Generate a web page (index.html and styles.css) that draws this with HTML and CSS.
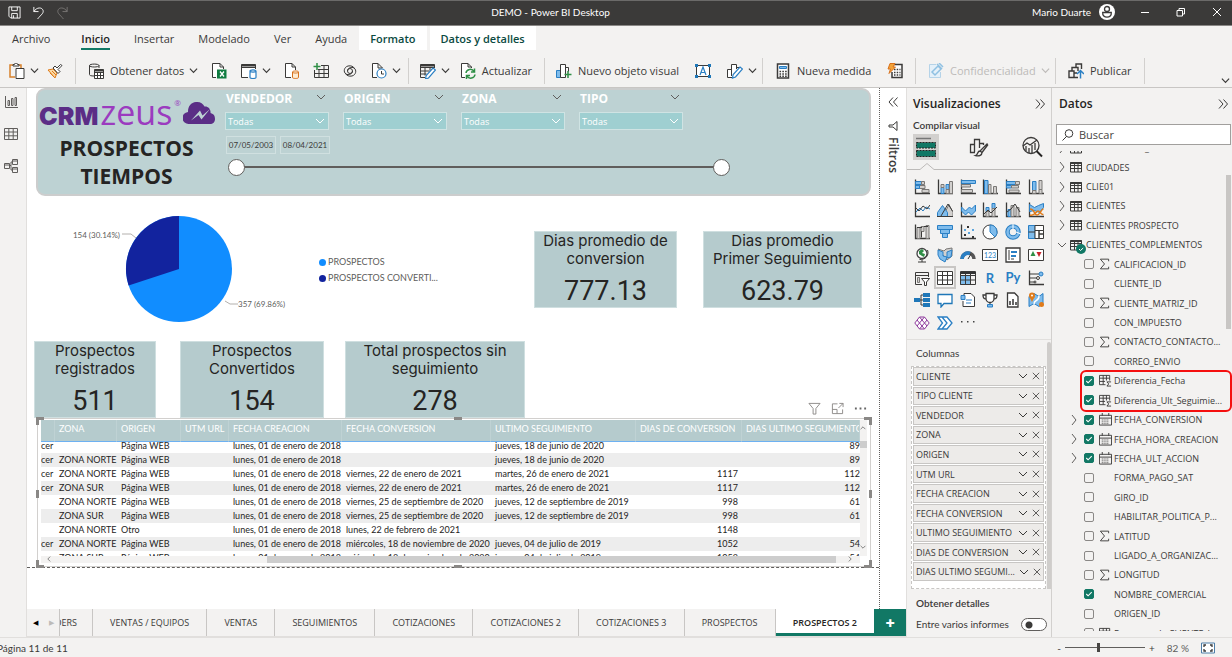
FILE: index.html
```
<!DOCTYPE html>
<html lang="es">

<head>
  <meta charset="UTF-8">
  <meta name="viewport" content="width=device-width, initial-scale=1.0">
  <title>DEMO - Power BI Desktop</title>
  <link rel="stylesheet" href="styles.css">
</head>

<body>
  <!-- Shared symbols -->
  <svg class="symbols" aria-hidden="true">
    <symbol id="chev" viewBox="0 0 10 10"><path class="ln" d="M1 3l4 4 4-4" /></symbol>
    <symbol id="chev-r" viewBox="0 0 10 10"><path class="ln" d="M3 0l4 5-4 5" /></symbol>
    <symbol id="close" viewBox="0 0 10 10"><path class="ln" d="M1 1l8 8M9 1l-8 8" /></symbol>
    <symbol id="dbl-r" viewBox="0 0 10 10"><path class="ln" d="M1 .5L5 5 1 9.5M5.5 .5l4 4.5-4 4.5" /></symbol>
    <symbol id="dbl-l" viewBox="0 0 10 10"><path class="ln" d="M5 .5L1 5l4 4.5M9.5 .5l-4 4.5 4 4.5" /></symbol>
    <symbol id="grid" viewBox="0 0 12 12"><path class="ln" d="M.5 1.5h11v9.5H.5zM.5 4.5h11M.5 7.5h11M4.5 1.5v9.5M8 1.5v9.5" /><path class="ln" d="M.5 2h11" stroke-width="2" /></symbol>
    <symbol id="calc" viewBox="0 0 14 14"><path class="ln" d="M7 11.5H.5V1.5h11V7M.5 4.5h11M.5 8h6M4.5 1.5v10M8 1.5V7" /><path class="ln" d="M13 8.5H8.5l2 2.2-2 2.3H13" /></symbol>
    <symbol id="cal" viewBox="0 0 14 14"><path class="ln" d="M.5 2.5h13v10.5H.5zM.5 5.5h13M3.5 0v3M10.5 0v3" /><path class="ln" stroke-dasharray="1 1" d="M3 7.5h8M3 9.5h8M3 11.5h8" /></symbol>
    <symbol id="sigma" viewBox="0 0 12 12"><path class="ln" d="M10.5 3V.7H1.5L6 6l-4.5 5.3h9V9" /></symbol>
  </svg>

  <header class="titlebar">
    <div class="quick">
      <button aria-label="Guardar"><svg viewBox="0 0 14 14"><path class="ln" d="M1 1h12v12H3l-2-2zM4 1v4h6V1M4 13V8h6v5M6 10v3" /></svg></button>
      <button aria-label="Deshacer"><svg viewBox="0 0 14 14"><path class="ln" d="M2 1v5h5M2 6c3-5 9-5 10-1 .5 3-2 4-6 9" /></svg></button>
      <button class="dim" aria-label="Rehacer"><svg viewBox="0 0 14 14"><path class="ln" d="M12 1v5H7M12 6C9 1 3 1 2 5c-.5 3 2 4 6 9" /></svg></button>
    </div>
    <h1>DEMO - Power BI Desktop</h1>
    <div class="account">
      <span>Mario Duarte</span>
      <svg class="avatar" viewBox="0 0 16 16"><circle cx="8" cy="8" r="8" fill="#fff" /><circle cx="8" cy="5" r="2.5" fill="none" stroke="#3b3a39" stroke-width="1.3" /><path d="M3.7 8.5h8.6c.3 3-1.7 4.7-4.3 4.7s-4.6-1.7-4.3-4.7z" fill="none" stroke="#3b3a39" stroke-width="1.3" /></svg>
    </div>
    <div class="window-btns">
      <button aria-label="Minimizar"><svg viewBox="0 0 10 10"><path class="ln" d="M1 5.5h8" /></svg></button>
      <button aria-label="Restaurar"><svg viewBox="0 0 10 10"><path class="ln" d="M1 3.5h5.5V9H1zM3 3.5v-2h5.5V7h-2" /></svg></button>
      <button aria-label="Cerrar"><svg viewBox="0 0 10 10"><path class="ln" d="M1 1l8 8M9 1l-8 8" /></svg></button>
    </div>
  </header>

  <nav class="menu">
    <a href="#" class="first">Archivo</a>
    <a href="#" class="active">Inicio</a>
    <a href="#">Insertar</a>
    <a href="#">Modelado</a>
    <a href="#">Ver</a>
    <a href="#">Ayuda</a>
    <a href="#" class="context">Formato</a>
    <a href="#" class="context">Datos y detalles</a>
  </nav>

  <div class="ribbon">
    <div class="group g-clip">
      <button aria-label="Pegar"><svg viewBox="0 0 16 16"><path d="M5 2H1v12h5" fill="none" stroke="#d8812b" stroke-width="1.5" /><path d="M10 2h2v3" fill="none" stroke="#d8812b" stroke-width="1.5" /><path class="ln" fill="#fff" d="M4 3V1.5h1.5a1.5 1.5 0 0 1 3 0H10V3zM7 5.5h8v10H7z" /></svg><svg class="chev"><use href="#chev" /></svg></button>
      <button aria-label="Copiar formato"><svg viewBox="0 0 16 16"><path d="M1 7l5-1 4 4-2 5z" fill="#fbd9a5" stroke="#e07b1a" /><path d="M3 10l4 4M5 8l4 4" stroke="#e07b1a" /><path class="ln" d="M6 5l2-2 2 2 3.5-3.5 1.5 1L11 6.5l2 2-2 2z" fill="#fff" /></svg></button>
    </div>
    <div class="group g-data">
      <button><svg viewBox="0 0 16 16"><path class="ln" d="M6 13c-3 0-4.5-.5-4.5-1.5v-9C1.5.6 11 .6 11 2.5V5M1.5 2.5C1.5 4.5 11 4.5 11 2.5" /><path class="ln" fill="#fff" d="M6.5 6.5h9v9h-9zM6.5 9.5h9M6.5 12.5h9M9.5 9.5v6M12.5 9.5v6" /><path class="ln" stroke-width="2" d="M6.5 7.5h9" /></svg>Obtener datos<svg class="chev"><use href="#chev" /></svg></button>
      <button aria-label="Libro de Excel"><svg viewBox="0 0 16 16"><path class="ln" fill="#fff" d="M5 14.5H1.5V.5H9L12.5 4v2" /><path class="ln" d="M9 .5V4h3.5" /><rect x="6" y="6.5" width="9.5" height="9" fill="#107c41" /><path d="M9 8.5l4 5M13 8.5l-4 5" stroke="#fff" stroke-width="1.3" /></svg></button>
      <button aria-label="Centro de datos"><svg viewBox="0 0 16 16"><path class="ln" fill="#fff" d="M7 14.5H.5V1.5h14V6M.5 4.5h14" /><path class="ln" d="M.5 2.5h14" stroke-width="2" /><path class="bo" d="M9 8v6.5c0 1.3 6 1.3 6 0V8M9 8c0 1.4 6 1.4 6 0s-6-1.4-6 0z" /></svg><svg class="chev"><use href="#chev" /></svg></button>
      <button aria-label="SQL Server"><svg viewBox="0 0 16 16"><path class="ln" fill="#fff" d="M7 14.5H1.5V.5H8L11.5 4v3M8 .5V4h3.5" /><path d="M8.5 9v5.5c0 1.3 6 1.3 6 0V9c0-1.4-6-1.4-6 0c0 1.4 6 1.4 6 0" fill="#fdebd3" stroke="#d8701b" /></svg></button>
      <button aria-label="Especificar datos"><svg viewBox="0 0 16 16"><path class="ln" d="M8 2.5h7.5v12h-14V7M1.5 10.5h14M5 6.5h10.5M6 6.5v8M11 2.5v12" /><path d="M4 0v7M.5 3.5h7" stroke="#2f8f46" stroke-width="1.5" /></svg></button>
      <button aria-label="Dataverse"><svg viewBox="0 0 16 16"><circle class="ln" cx="8" cy="8" r="2.5" /><path class="ln" d="M10.5 8c0 3-4 4.500-6.500 3C1 9 2 4 6 3c3-.7 5.500.5 6.500 2.500M5.500 8c0-3 4-4.500 6.500-3 3 2 2 7-2 8-3 .7-5.500-.5-6.500-2.500" /></svg></button>
      <button aria-label="Orígenes recientes"><svg viewBox="0 0 16 16"><path class="ln" fill="#fff" d="M6 14.5H1.5V.5H7L11.5 5M7 .5V5h4.5" /><circle class="bo" cx="10.5" cy="10.5" r="4.5" fill="#fff" /><path class="ln" d="M10.5 8v3h2.5" /></svg><svg class="chev"><use href="#chev" /></svg></button>
    </div>
    <div class="group g-query">
      <button aria-label="Transformar datos"><svg viewBox="0 0 16 16"><path class="ln" d="M5 14.5H.5v-13h14V5M.5 4.5h14M.5 8h9M.5 11h6M5 4.5v8M10 4.5v3" /><path class="ln" d="M.5 2.5h14" stroke-width="2" /><path class="bo" fill="#fff" d="M13 5l2.5 2-7 8-3 1 .7-3.5z" /></svg><svg class="chev"><use href="#chev" /></svg></button>
      <button><svg viewBox="0 0 16 16"><path class="ln" fill="#fff" d="M5 14.5H1.5V.5H8L11.5 4v1M8 .5V4h3.5" /><path d="M6 10c.5-4 6-5 8-1.5M14.5 5.5v3.5H11M15 11.5c-.5 4-6 5-8 1.5M6.5 16v-3.5H10" fill="none" stroke="#2f8f46" stroke-width="1.5" /></svg>Actualizar</button>
    </div>
    <div class="group g-insert">
      <button><svg viewBox="0 0 16 16"><path class="bf" d="M.5 7.5h4v7h-4z" /><path class="ln" fill="#fff" d="M4.5 1.5h5v13h-5zM9.5 4.5h3v4" /><path d="M12 8v7M8.5 11.5h7" stroke="#2f8f46" stroke-width="1.5" /></svg>Nuevo objeto visual</button>
      <button aria-label="Cuadro de texto"><svg viewBox="0 0 16 16"><path class="ln" d="M1.5 2.5h13v11h-13z" fill="#fff" /><path class="bo" d="M5 12l3-8 3 8M6 9.5h4" /><path fill="#1f77b8" d="M0 1h3v3H0zM13 1h3v3h-3zM0 12h3v3H0zM13 12h3v3h-3z" /></svg></button>
      <button aria-label="Más objetos visuales"><svg viewBox="0 0 16 16"><path class="ln" d="M5 14.5H.5V6.5h4M4.5 13V1.5h5V6M9.5 4.5h4" fill="#fff" /><path class="bo" fill="#fff" d="M13 4l2.5 2-7 8-3 1 .7-3.5z" /></svg><svg class="chev"><use href="#chev" /></svg></button>
    </div>
    <div class="group g-calc">
      <button><svg viewBox="0 0 16 16"><path class="ln" stroke-width="1.5" fill="#fff" d="M2.5 1h11v14h-11z" /><path class="bf" d="M4.5 3.5h7v2h-7z" /><path class="ln" stroke-width="1.6" stroke-dasharray="1.6 1.2" d="M4.5 8.5h7.5M4.5 11h7.5M4.5 13.2h7.5" /></svg>Nueva medida</button>
      <button aria-label="Medida rápida"><svg viewBox="0 0 16 16"><path class="ln" stroke-width="1.5" fill="#fff" d="M7 1.5h8v13H5V9" /><path class="ln" stroke-width="1.5" stroke-dasharray="1.5 1.2" d="M7 6.5h6.5M7 9.5h6.5M7 12h6.5" /><path fill="#f2a33a" stroke="#d8701b" d="M3 .5h5L6 4h2.5L2 10.5 3.5 6H1z" /></svg></button>
    </div>
    <div class="group g-conf">
      <button disabled><svg viewBox="0 0 16 16"><path fill="#e4f0f9" stroke="#b5d3e8" d="M8 1.5H1.5v13h11V9" /><path fill="none" stroke="#8fc0e2" stroke-width="1.5" d="M4 9l6-6 3 3-6 6zM9 1l5 5M11 0l4 4" /></svg>Confidencialidad<svg class="chev"><use href="#chev" /></svg></button>
    </div>
    <div class="group g-share">
      <button><svg viewBox="0 0 16 16"><path class="ln" stroke-width="1.4" d="M1 8h5v6.5H1zM4 8V4.5h6V8M8 4V1h5.5v5M6 14.5h4M6 10h3" /><path stroke="#2a7fc4" stroke-width="1.5" fill="none" d="M12.5 15.5V8M9 11l3.5-3.5L16 11" /></svg>Publicar</button>
    </div>
    <button class="collapse" aria-label="Contraer cinta"><svg class="chev"><use href="#chev" /></svg></button>
  </div>

  <main class="workspace">
    <aside class="views">
      <button aria-label="Informe"><svg viewBox="0 0 14 14"><path class="ln" d="M1.5 1v11.5H14M4 5.5h1.5v5H4zM7.5 3.5H9v7H7.5zM11 2.5h1.5v8H11z" /></svg></button>
      <button aria-label="Datos"><svg viewBox="0 0 14 14"><path class="ln" d="M.5 1.5h13v11H.5zM.5 5h13M.5 8.8h13M4.8 1.5v11M9.2 1.5v11" /></svg></button>
      <button aria-label="Modelo"><svg viewBox="0 0 14 14"><path class="ln" d="M.5 4.5h5v5h-5zM8.5 .5h5v5h-5zM8.5 8.5h5v5h-5zM.5 6h5M8.5 2h5M8.5 10h5M5.5 6.5h1.5V3h1.5M7 6.5v4.5h1.5" /></svg></button>
    </aside>

    <div class="center">
      <div class="stage">
        <section class="page">
          <div class="banner">
            <div class="brand">
              <div class="logo">
                <span class="crm">CRM</span><span class="zeus">zeus</span><sup>®</sup>
                <svg viewBox="0 0 32 24"><path fill="#5b2d86" d="M6 23a6 6 0 0 1-1-12C5 5 8 1.5 13 1c4-.5 7 1.5 8.5 4.5C25 5 28 8 27.5 12 31 13 32 15 32 18c0 3-2 5-5 5z" /><path fill="#bdd2d3" d="M8 19.5l9-10 2.5 5L27 8l-8.500 10.500-3-4.500z" /></svg>
              </div>
              <h2>PROSPECTOS<br>TIEMPOS</h2>
            </div>
            <div class="slicers">
              <div class="slicer-row" id="slicers"></div>
              <div class="dates">
                <input type="text" value="07/05/2003" aria-label="Fecha inicial">
                <input type="text" value="08/04/2021" aria-label="Fecha final">
              </div>
              <div class="range">
                <input type="range" min="0" max="100" value="0" aria-label="Desde">
                <input type="range" min="0" max="100" value="100" aria-label="Hasta">
              </div>
            </div>
          </div>

          <div class="row-top">
            <svg class="pie" viewBox="0 0 220 110" role="img" aria-label="Prospectos">
              <circle cx="109" cy="55" r="53" fill="#118dff" />
              <path fill="#12239e" d="M109 55V2A53 53 0 0 0 58.6 71.5z" />
              <path class="lead" d="M52 20h9l5 4M155 87l5 3h8" />
              <text x="50" y="24" text-anchor="end">154 (30.14%)</text>
              <text x="168" y="93">357 (69.86%)</text>
            </svg>
            <ul class="legend">
              <li><i class="dot light"></i>PROSPECTOS</li>
              <li><i class="dot dark"></i>PROSPECTOS CONVERTI...</li>
            </ul>
            <div class="card w-conv"><p>Dias promedio de conversion</p><strong>777.13</strong></div>
            <div class="card w-seg"><p>Dias promedio<br>Primer Seguimiento</p><strong>623.79</strong></div>
          </div>

          <div class="row-bottom">
            <div class="card w-reg"><p>Prospectos registrados</p><strong>511</strong></div>
            <div class="card w-cvt"><p>Prospectos<br>Convertidos</p><strong>154</strong></div>
            <div class="card w-sin"><p>Total prospectos sin seguimiento</p><strong>278</strong></div>
            <div class="visual-tools">
              <button aria-label="Filtros"><svg viewBox="0 0 14 14"><path class="ln" d="M1 1.5h12L8.5 7v6h-3V7z" /></svg></button>
              <button aria-label="Modo de enfoque"><svg viewBox="0 0 14 14"><path class="ln" d="M7 2H1.5v10.5h11V8M9 1.5h4v4M13 1.5L8 6.5M1.5 8h5v4.5" /></svg></button>
              <button aria-label="Más opciones"><svg viewBox="0 0 14 14"><path fill="#666" d="M1 6h2v2H1zM6 6h2v2H6zM11 6h2v2h-2z" /></svg></button>
            </div>
          </div>

          <div class="table-visual">
            <i class="handle tl"></i><i class="handle tc"></i><i class="handle tr"></i>
            <i class="handle ml"></i><i class="handle mr"></i>
            <i class="handle bl"></i><i class="handle bc"></i><i class="handle br"></i>
            <div class="table-scroll" id="table-scroll">
              <table>
                <colgroup>
                  <col class="c1"><col class="c2"><col class="c3"><col class="c4"><col class="c5"><col class="c6"><col class="c7"><col class="c8"><col>
                </colgroup>
                <thead>
                  <tr>
                    <th></th>
                    <th>ZONA</th>
                    <th>ORIGEN</th>
                    <th>UTM URL</th>
                    <th>FECHA CREACION</th>
                    <th>FECHA CONVERSION</th>
                    <th>ULTIMO SEGUIMIENTO</th>
                    <th>DIAS DE CONVERSION</th>
                    <th>DIAS ULTIMO SEGUMIENTO</th>
                  </tr>
                </thead>
                <tbody id="table-body"></tbody>
              </table>
            </div>
            <div class="vbar"><svg><use href="#chev" /></svg><i></i><svg><use href="#chev" /></svg></div>
            <div class="hbar"><svg><use href="#chev" /></svg><i></i><svg><use href="#chev" /></svg></div>
          </div>
        </section>

        <aside class="filters">
          <button aria-label="Expandir"><svg><use href="#dbl-l" /></svg></button>
          <svg viewBox="0 0 10 10"><path class="ln" d="M9 .5v9L5 6H1V4h4z" /></svg>
          <h3>Filtros</h3>
        </aside>
      </div>

      <nav class="tabs">
        <span class="arrows"><button aria-label="Anterior">◀</button><button disabled aria-label="Siguiente">▶</button></span>
        <button class="t0"><span>DERS</span></button>
        <button>VENTAS / EQUIPOS</button>
        <button>VENTAS</button>
        <button>SEGUIMIENTOS</button>
        <button>COTIZACIONES</button>
        <button>COTIZACIONES 2</button>
        <button>COTIZACIONES 3</button>
        <button>PROSPECTOS</button>
        <button class="active">PROSPECTOS 2</button>
        <button class="add" aria-label="Nueva página">+</button>
      </nav>
    </div>

    <aside class="viz">
      <div class="pane-head">
        <h3>Visualizaciones</h3>
        <button aria-label="Contraer"><svg><use href="#dbl-r" /></svg></button>
      </div>
      <h4>Compilar visual</h4>
      <div class="modes">
        <button class="on" aria-label="Compilar"><svg viewBox="0 0 22 22"><path d="M1 2.5h15" stroke="#777" stroke-width="1.5" /><path d="M1.5 6.5h19v5.5h-19zM1.5 14.5h19v6h-19z" fill="#117865" stroke="#252423" stroke-dasharray="2 1" /></svg></button>
        <button aria-label="Formato"><svg viewBox="0 0 22 22"><path class="ln" stroke-width="1.3" d="M7 16.5H2.5v-8h4M6.5 16V3.5h5V12M11.5 7.5h4V9" /><path class="ln" stroke-width="1.3" d="M19.5 7.5L12 15M20 8.5l-6 8M12 15c-3 0-1.5 3.5-4.5 4.5 4 1 6.5-.5 6.5-3z" /></svg></button>
        <button aria-label="Analizar"><svg viewBox="0 0 22 22"><circle class="ln" cx="10" cy="9.5" r="8" stroke-width="1.3" /><path class="ln" stroke-width="1.3" d="M2 10l4-3 3 2 7-5M5 10v5M8 12v5M11 9v8M14 7v7" /><path d="M15.5 15l5.5 5.5" stroke="#252423" stroke-width="2" /></svg></button>
      </div>
      <svg class="notch" viewBox="0 0 145 8" preserveAspectRatio="xMinYMin slice"><path d="M0 6.5h13l7-6 7 6h140" fill="none" stroke="#bdbbb9" /></svg>
      <div class="gallery" id="gallery"></div>
      <div class="wells">
        <div class="wells-main">
          <h5>Columnas</h5>
          <div class="well" id="well"></div>
        </div>
        <i class="wells-bar"></i>
      </div>
      <h5 class="drill">Obtener detalles</h5>
      <label class="switch">Entre varios informes<input type="checkbox"></label>
    </aside>

    <aside class="data">
      <div class="pane-head">
        <h3>Datos</h3>
        <button aria-label="Contraer"><svg><use href="#dbl-r" /></svg></button>
      </div>
      <label class="search">
        <svg viewBox="0 0 12 12"><circle class="ln" cx="7" cy="4.5" r="3.8" /><path class="ln" d="M4.5 7.5L.5 11.5" /></svg>
        <input type="text" placeholder="Buscar" aria-label="Buscar">
      </label>
      <div class="tree-clip">
        <div class="tree" id="tree"></div>
        <i class="tree-bar"></i>
      </div>
    </aside>
  </main>

  <footer class="status">
    <span class="page-no">Página 11 de 11</span>
    <button aria-label="Alejar">-</button>
    <input type="range" min="0" max="200" value="82" aria-label="Zoom">
    <button aria-label="Acercar">+</button>
    <span class="pct">82 %</span>
    <button aria-label="Ajustar a la página"><svg viewBox="0 0 14 12"><path d="M.5 1h13v10H.5z" fill="#fff" stroke="#4d7ea8" /><path class="ln" stroke-width="1.3" d="M3 5V3h2M9 3h2v2M11 7v2H9M5 9H3V7" /></svg></button>
  </footer>

  <script>
    const use = (id, cls = "") => `<svg class="${cls}"><use href="#${id}" /></svg>`;

    // Slicers
    document.getElementById("slicers").innerHTML = ["VENDEDOR", "ORIGEN", "ZONA", "TIPO"].map(name => `
      <div class="slicer">
        <label for="s-${name}">${name}</label>${use("chev", "chev")}
        <select id="s-${name}"><option>Todas</option></select>
      </div>
    `).join("");

    // Table rows
    const day = "lunes, 01 de enero de 2018";
    const rows = [
      ["cer", "", "Página WEB", "", day, "", "jueves, 18 de junio de 2020", "", "89"],
      ["cer", "ZONA NORTE", "Página WEB", "", day, "", "jueves, 18 de junio de 2020", "", "89"],
      ["cer", "ZONA NORTE", "Página WEB", "", day, "viernes, 22 de enero de 2021", "martes, 26 de enero de 2021", "1117", "112"],
      ["cer", "ZONA SUR", "Página WEB", "", day, "viernes, 22 de enero de 2021", "martes, 26 de enero de 2021", "1117", "112"],
      ["", "ZONA NORTE", "Página WEB", "", day, "viernes, 25 de septiembre de 2020", "jueves, 12 de septiembre de 2019", "998", "61"],
      ["", "ZONA SUR", "Página WEB", "", day, "viernes, 25 de septiembre de 2020", "jueves, 12 de septiembre de 2019", "998", "61"],
      ["", "ZONA NORTE", "Otro", "", day, "lunes, 22 de febrero de 2021", "", "1148", ""],
      ["cer", "ZONA NORTE", "Página WEB", "", day, "miércoles, 18 de noviembre de 2020", "jueves, 04 de julio de 2019", "1052", "54"],
      ["cer", "ZONA SUR", "Página WEB", "", day, "miércoles, 18 de noviembre de 2020", "jueves, 04 de julio de 2019", "1052", "54"]
    ];
    document.getElementById("table-body").innerHTML = rows.map(row => `
      <tr>${row.map(cell => `<td>${cell}</td>`).join("")}</tr>
    `).join("");
    document.getElementById("table-scroll").scrollTop = 3;

    // Visual types, drawn on a 16 x 16 box
    const axis = `<path class="ln" stroke-width="1.3" d="M1.5 .5v14H16" />`;
    const bf = d => `<path class="bf" d="${d}" />`;
    const gf = d => `<path class="gf" d="${d}" />`;
    const ln = d => `<path class="ln" d="${d}" />`;
    const visuals = [
      ["Barras apiladas", axis + bf("M1.5 2.5h6v3h-6z") + gf("M7.5 2.5h3v3h-3zM5 6.5h6v3H5zM8 10.5h7v3H8z") + bf("M1.5 6.5h4v3h-4z")],
      ["Columnas apiladas", axis + bf("M4 8.5h3v6H4zM9 5.5h3v5H9z") + gf("M4 5.5h3v3H4zM9 10.5h3v4H9zM12.5 2.5h3v12h-3z")],
      ["Barras agrupadas", axis + bf("M1.5 1.5h14v3h-14z") + gf("M1.5 5.5h9v2.5h-9zM1.5 10.5h11v3h-11z")],
      ["Columnas agrupadas", axis + bf("M2.5 1.5h3.5v13h-3.5z") + gf("M6.5 5.5h2.5v9H6.5zM11.5 7.5h3v7h-3z")],
      ["Barras 100%", axis + bf("M1.5 2.5h9v3h-9zM1.5 6.5h5v2.5h-5z") + gf("M10.5 2.5h4v3h-4zM6.5 6.5h7v2.5h-7zM4 11h10v2.5H4z")],
      ["Columnas 100%", axis + bf("M4.5 2.5h3.5v9H4.5z") + gf("M4.5 11.5h3.5v3H4.5zM11 1.5h3v9h-3zM11 10.5h3v4h-3z")],
      ["Líneas", axis + `<path d="M2 10l4-4 3 3 3-4 4 2" fill="none" stroke="#2a7fc4" />` + ln("M2 6l3 3 4-5 4 3 3-4")],
      ["Áreas", gf("M6 14.5l6-12 4 8v4z") + bf("M.5 14.5v-4l5-7 5 7v4z") + ln("M0 14.5h16M4 14l7-12 4.5 7")],
      ["Áreas apiladas", axis + bf("M1.5 5l4 4 4-4 2 2 4-4v6l-4 4-3-3-3 3-4-4z")],
      ["Líneas y columnas apiladas", axis + bf("M4 5.5h3v4H4zM10 1.5h3v5h-3z") + gf("M4 9.5h3v5H4zM10 6.5h3v8h-3z") + ln("M2 12l4-4 3 3 6-6")],
      ["Líneas y columnas", axis + bf("M3 7.5h3v7H3z") + gf("M6 3.5h3v11H6zM11 5.5h3v9h-3z") + ln("M2 10l4-3 4-5 5 8")],
      ["Cinta", axis + bf("M1.5 2.5l5 3 4-2 5-2v4l-4 5-5-2-5 1z") + `<path d="M2 13c4 2 6-4 8-4s3 4 5.5 3.5M2 7c5 0 4 6 7 6s4-6 6.5-6" fill="none" stroke="#e07b1a" stroke-width="1.5" />`],
      ["Cascada", axis + gf("M3 3.5h3v11H3zM7 2.5h3v5H7zM12 1.5h3v13h-3z") + ln("M3 3.5h5M7.5 7.5v6M10 2.5h4")],
      ["Embudo", bf("M.5 1.5h15v4H.5zM3.5 5.5h9v4h-9zM5.5 9.5h5v4h-5z")],
      ["Dispersión", axis + `<path fill="#333" d="M4 10h2v2H4zM7 2h2v2H7zM12 12h2v2h-2z" /><path fill="#5aa5de" d="M4 5h2v2H4zM8 8h2v2H8zM12 5h2v2h-2z" />`],
      ["Circular", `<circle class="ln" cx="8" cy="8" r="7" fill="#fff" />` + bf("M8 8V1a7 7 0 0 1 5 12z")],
      ["Anillos", `<circle cx="8" cy="8" r="5.5" fill="none" stroke="#2a7fc4" stroke-width="4.5" /><circle cx="8" cy="8" r="5.5" fill="none" stroke="#7fbcec" stroke-width="2.5" />` + `<path stroke="#fff" d="M8 0v5M11 8l5 2" />`],
      ["Treemap", bf("M.5 1.5h6.5v13H.5z") + `<path class="ln" fill="#fff" d="M7 1.5h8.5v5H7zM7 6.5h4v8H7zM11 10h4.5v4.5H11zM11 6.5h4.5V10H11z" />` + ln("M.5 8h6.5")],
      ["Mapa", `<circle cx="8" cy="6.5" r="5" fill="#fff" stroke="#444" stroke-width="1.3" /><path fill="#2f8f46" d="M5 4l3-2 2 2-2 2 3 1-1 3-2-1-3-2z" />` + ln("M13.5 3c2 5-2 10-8 9.5M8 13v2M4 15h8")],
      ["Mapa coroplético", gf("M1 2l6 2 2-2 6-1v8l-5 4z") + bf("M1 3l5 2v4l4 1-2 5-5-3-2-4zM10 5l5-2-1 7-4 1z")],
      ["Medidor", `<path fill="none" stroke="#555" stroke-width="3.5" d="M2 12a6 6 0 0 1 12 0" /><path fill="none" stroke="#2a7fc4" stroke-width="3.5" d="M2 12a6 6 0 0 1 8-5.5" />` + ln("M8 12l3-5")],
      ["Tarjeta", `<path class="ln" fill="#fff" d="M.5 2.5h15v11H.5z" /><text x="8" y="11" text-anchor="middle">123</text>`],
      ["Tarjeta varias filas", `<path class="ln" fill="#fff" stroke-width="1.3" d="M1 1h14v14H1z" /><path stroke="#2a7fc4" stroke-width="2" d="M6 5h6M6 9h5" />` + ln("M4 3v10M6 12h3")],
      ["KPI", `<path class="ln" fill="#fff" d="M.5 2.5h15v11H.5z" /><path fill="#2f8f46" d="M2.5 9l2.5-5 2.5 5z" /><path fill="#c8242b" d="M8.5 5h5L11 10z" />`],
      ["Segmentación", ln("M8 14.5H1.5v-12h13V7M1.5 5.5h13") + gf("M3.5 7.5h2v5h-2z") + `<path class="ln" fill="#fff" d="M7.5 8.5h8L12.5 12v3.5h-2V12z" />`],
      ["Tabla", `<path class="ln" fill="#fff" d="M.5 1.5h15v13H.5zM.5 5.5h15M.5 10h15M5.5 1.5v13M10.5 1.5v13" />`],
      ["Matriz", `<path class="bf" d="M.5 5.5h10v9H.5z" /><path class="ln" d="M.5 1.5h15v13H.5zM.5 5.5h15M.5 10h15M5.5 1.5v13M10.5 1.5v13" /><path d="M.5 3h15" stroke="#333" stroke-width="2" />`],
      ["Script de R", `<text class="big" x="8" y="13" text-anchor="middle">R</text>`],
      ["Script de Python", `<text class="big" x="8" y="12" text-anchor="middle">Py</text>`],
      ["Influenciadores", axis + ln("M1.5 4h10M1.5 8h7M1.5 12h5") + `<circle cx="13" cy="4" r="2" fill="#7fbcec" stroke="#2a7fc4" /><circle class="ln" cx="10" cy="8" r="1.5" /><circle class="ln" cx="7" cy="12" r="1" />`],
      ["Árbol de descomposición", ln("M5 8h4M7 3v10M7 3h3M7 13h3") + `<path fill="#1f77b8" d="M0 6h6v4H0zM9 1h7v4H9zM9 6h7v4H9zM9 11h7v4H9z" />`],
      ["Preguntas y respuestas", `<path fill="#fff" stroke="#1f77b8" stroke-width="1.3" d="M1 2.5h14v9H7L4 15v-3.5H1z" />`],
      ["Narrativa", `<path class="ln" fill="#fff" d="M4 4V1.5h7L14.5 5v9.5H3V9" />` + bf("M1 3.5h4v4H1z") + `<path stroke="#2a7fc4" d="M6 8h6M6 11h5" />`],
      ["Objetivos", `<path class="ln" stroke-width="1.3" fill="#fff" d="M4 1.5h8v5a4 4 0 0 1-8 0zM4 3H1c0 3 1 4 3 4M12 3h3c0 3-1 4-3 4M8 10.5V14" />` + bf("M5.5 12.5h5v2.5h-5z")],
      ["Informe paginado", `<path class="ln" stroke-width="1.3" fill="#fff" d="M2.5 1h7L13 4.5V15H2.5z" /><path stroke="#333" stroke-width="1.5" d="M5 13V9M8 13V7M11 13v-3" />`],
      ["ArcGIS", bf("M1 4.5l5-3 5 3 4-3v10l-4 3-5-3-5 3z") + `<path fill="none" stroke="#fff" stroke-width="1.5" d="M6 12c0-5 5-2 5-8" /><circle cx="4" cy="3.5" r="3" fill="#e07b1a" /><path fill="#e07b1a" d="M1.5 5h5L4 10z" /><circle cx="4" cy="3.5" r="1" fill="#fff" /><circle cx="13.5" cy="12.5" r="2.5" fill="#e07b1a" />`],
      ["Power Apps", `<path fill="#fff" stroke="#8e3a9d" d="M.8 8l4.7-6L8 5l2.5-3 4.700 6-4.700 6L8 11l-2.500 3zM8 5l2.500 3L8 11 5.500 8zM3 5l2.500 3L3 11M13 5l-2.500 3L13 11M5.500 2h5M5.500 14h5" />`],
      ["Power Automate", `<path fill="#fff" stroke="#2a7fc4" stroke-width="1.3" d="M1 2h9l5 6-5 6H1l4.5-6zM5 2l5 6-5 6" />`],
      ["Más", `<path fill="#444" d="M1 6h1.5v1.5H1zM7 6h1.5v1.5H7zM13 6h1.5v1.5H13z" />`]
    ];
    document.getElementById("gallery").innerHTML = visuals.map(([name, art]) => `
      <button class="${name === "Tabla" ? "on" : ""}" aria-label="${name}"><svg viewBox="0 0 16 16">${art}</svg></button>
    `).join("");

    // Fields placed in the well
    const fields = ["CLIENTE", "TIPO CLIENTE", "VENDEDOR", "ZONA", "ORIGEN", "UTM URL", "FECHA CREACION", "FECHA CONVERSION", "ULTIMO SEGUIMIENTO", "DIAS DE CONVERSION", "DIAS ULTIMO SEGUMI..."];
    document.getElementById("well").innerHTML = fields.map(f => `
      <div class="pill"><span>${f}</span>
        <button aria-label="Opciones de ${f}">${use("chev")}</button>
        <button aria-label="Quitar ${f}">${use("close", "x")}</button>
      </div>
    `).join("");

    // Data pane: [label, icon, checked, expandable]
    const tableRow = (name, open) => `
      <div class="node">${use(open ? "chev" : "chev-r", "twist")}<span class="tbl">${use("grid")}${open ? '<svg class="badge" viewBox="0 0 10 10"><circle cx="5" cy="5" r="5" fill="#117865" /><path d="M3 5l1.5 1.5L7.2 4" fill="none" stroke="#fff" /></svg>' : ""}</span><span class="name">${name}</span></div>`;
    const fieldRow = ([name, icon, checked, expandable]) => `
      <label class="node field">${expandable ? use("chev-r", "twist") : '<i class="twist"></i>'}<input type="checkbox" ${checked ? "checked" : ""}><span class="ico">${icon ? use(icon, icon) : ""}</span><span class="name">${name}</span></label>`;
    const before = [["CALIFICACION_ID", "sigma"], ["CLIENTE_ID"], ["CLIENTE_MATRIZ_ID", "sigma"], ["CON_IMPUESTO"], ["CONTACTO_CONTACTO...", "sigma"], ["CORREO_ENVIO"]];
    const marked = [["Diferencia_Fecha", "calc", true], ["Diferencia_Ult_Seguimie...", "calc", true]];
    const after = [
      ["FECHA_CONVERSION", "cal", true, true], ["FECHA_HORA_CREACION", "cal", true, true], ["FECHA_ULT_ACCION", "cal", true, true],
      ["FORMA_PAGO_SAT"], ["GIRO_ID"], ["HABILITAR_POLITICA_P..."], ["LATITUD", "sigma"], ["LIGADO_A_ORGANIZAC..."],
      ["LONGITUD", "sigma"], ["NOMBRE_COMERCIAL", "", true], ["ORIGEN_ID"], ["Recuento de CLIENTE_I...", "calc"]
    ];
    document.getElementById("tree").innerHTML =
      ["CALIFICACION_ACCIONES", "CIUDADES", "CLIE01", "CLIENTES", "CLIENTES PROSPECTO"].map(n => tableRow(n)).join("") +
      tableRow("CLIENTES_COMPLEMENTOS", true) +
      before.map(fieldRow).join("") +
      `<div class="marked">${marked.map(fieldRow).join("")}</div>` +
      after.map(fieldRow).join("");
  </script>
</body>

</html>
```
FILE: styles.css
```
* {
  box-sizing: border-box;
}

body {
  margin: 0;
  height: 100vh;
  display: flex;
  flex-direction: column;
  overflow: hidden;
  background: #f3f2f1;
  color: #3b3a39;
  font-family: Lato, "Open Sans", sans-serif;
  font-size: 10px;
}

h1, h2, h3, h4, h5, p, ul {
  margin: 0;
  padding: 0;
}

button, input, select {
  font: inherit;
  color: inherit;
  background: none;
  border: none;
  padding: 0;
  margin: 0;
}

button {
  display: flex;
  align-items: center;
  justify-content: center;
}

a {
  color: inherit;
  text-decoration: none;
}

svg {
  flex: none;
}

.symbols {
  display: none;
}

.ln {
  fill: none;
  stroke: currentColor;
}

.ln[fill="#fff"] {
  fill: #fff;
}

.bo {
  fill: #fff;
  stroke: #2a7fc4;
  stroke-width: 1.2;
}

.bf {
  fill: #7fbcec;
  stroke: #2a7fc4;
}

.gf {
  fill: #d2d0ce;
  stroke: #7a7876;
}

/* Title bar */
.titlebar {
  flex: none;
  height: 26px;
  display: flex;
  align-items: center;
  background: #3b3a39;
  border-top: 1px solid #6b6a69;
  border-bottom: 1px solid #8a8886;
  padding-bottom: 2px;
  color: #fff;
}

.titlebar h1 {
  flex: 1;
  text-align: center;
  font-size: 10px;
  font-weight: 400;
}

.quick {
  display: flex;
  gap: 11px;
  padding-left: 8px;
}

.quick svg {
  width: 13px;
  height: 13px;
}

.quick .dim {
  color: #797775;
}

.account {
  display: flex;
  align-items: center;
  gap: 8px;
}

.avatar {
  width: 16px;
  height: 16px;
}

.window-btns {
  display: flex;
  gap: 26px;
  padding: 0 10px 0 25px;
}

.window-btns svg {
  width: 10px;
  height: 10px;
}

/* Menu and ribbon */
.menu,
.ribbon,
.pane-head,
.filters,
.search,
.brand,
.slicer,
.tabs,
.well,
.tree {
  font-family: "Open Sans", "Noto Sans", sans-serif;
}

.menu {
  flex: none;
  height: 24px;
  display: flex;
  font-size: 11px;
}

.menu a {
  display: flex;
  align-items: center;
  padding: 0 12px;
}

.menu .first {
  margin-right: 7px;
}

.menu .active {
  font-weight: 600;
  color: #252423;
  box-shadow: inset 0 -2px #117865;
  padding: 0;
  margin: 0 12px;
}

.menu .context {
  padding: 0 11px;
  background: #fff;
  color: #0b4a3f;
  font-weight: 600;
  margin-right: 3px;
}

.ribbon {
  flex: none;
  height: 38px;
  display: flex;
  align-items: center;
  padding-top: 4px;
  border-bottom: 1px solid #c8c6c4;
  font-size: 11px;
}

.group {
  height: 26px;
  display: flex;
  justify-content: space-between;
  align-items: center;
  padding: 0 12px;
  border-right: 1px solid #d2d0ce;
}

.group button {
  gap: 6px;
  white-space: nowrap;
}

.group svg {
  width: 16px;
  height: 16px;
}

.group .chev,
.collapse .chev {
  width: 9px;
  height: 9px;
  margin-left: -1px;
  stroke-width: 1.3;
}

.group button:disabled {
  color: #bdbbb9;
}

.g-clip { flex: 0 0 76px; padding: 0 12px 0 9px; }
.g-data { flex: 0 0 333px; padding: 0 7px 0 12px; }
.g-query { flex: 0 0 136px; padding: 0 12px 0 11px; }
.g-insert { flex: 0 0 218px; padding: 0 5px 0 11px; }
.g-calc { flex: 0 0 153px; }
.g-conf { flex: 0 0 140px; padding: 0 5px 0 12px; }
.g-share { flex: 0 0 89px; }

.collapse {
  margin: 20px 2px 0 auto;
}

/* Workspace */
.workspace {
  flex: 1;
  min-height: 0;
  display: flex;
}

.views {
  flex: none;
  width: 27px;
  display: flex;
  flex-direction: column;
  gap: 18px;
  padding: 7px 0 0 4px;
  border-right: 1px solid #e1dfdd;
  color: #605e5c;
}

.views button {
  width: 14px;
}

.views svg {
  width: 14px;
  height: 14px;
}

.center {
  flex: 1;
  min-width: 0;
  display: flex;
  flex-direction: column;
}

.stage {
  flex: 1;
  min-height: 0;
  display: flex;
  background: #fff;
}

.page {
  flex: 1;
  min-width: 0;
  display: flex;
  flex-direction: column;
  border-right: 1px dotted #605e5c;
}

.banner {
  display: flex;
  margin: 0 8px 0 9px;
  padding: 0 0 4px;
  background: #bdd2d3;
  border: 2px solid #cccdcd;
  border-radius: 9px;
}

.brand {
  width: 187px;
  padding-right: 10px;
  text-align: center;
}

.logo {
  height: 44px;
  display: flex;
  align-items: baseline;
  justify-content: space-between;
  padding: 0 0 0 1px;
  line-height: 44px;
}

.crm {
  font-family: Inter, sans-serif;
  font-size: 25px;
  font-weight: 900;
  color: #5b2d86;
}

.zeus {
  font-size: 34px;
  color: #9b3bbf;
}

.logo sup {
  font-size: 8px;
  line-height: 8px;
  align-self: flex-start;
  margin-top: 9px;
  color: #9b3bbf;
}

.logo svg {
  width: 32px;
  height: 24px;
}

.brand h2 {
  font-size: 21px;
  line-height: 28px;
  color: #252423;
}

.slicers {
  flex: 1;
}

.slicer-row {
  display: flex;
  gap: 14px;
}

.slicer {
  width: 104px;
  display: grid;
  grid-template-columns: 1fr 10px;
  align-items: center;
}

.slicer label {
  padding-left: 1px;
  font-size: 12px;
  font-weight: 700;
  line-height: 18px;
  color: #fff;
}

.slicer .chev {
  width: 10px;
  height: 10px;
  margin: -4px 0 0 -3px;
  color: #605e5c;
}

.slicer select {
  grid-column: 1 / 3;
  height: 18px;
  margin-top: 4px;
  padding: 0 2px;
  appearance: none;
  border: 1px solid #cfe3e3;
  border-radius: 0;
  color: #fff;
  font-size: 9px;
  background: #9fcfd1 url("data:image/svg+xml,%3Csvg xmlns='http://www.w3.org/2000/svg' viewBox='0 0 10 10'%3E%3Cpath d='M1 3l4 4 4-4' fill='none' stroke='%23fff'/%3E%3C/svg%3E") no-repeat right 3px center / 10px;
}

.dates {
  display: flex;
  gap: 4px;
  margin: 6px 0 0 1px;
}

.dates input {
  width: 50px;
  height: 18px;
  border: 1px solid #d0e0e0;
  text-align: center;
  font-size: 8px;
}

.range {
  width: 80%;
  max-width: 502px;
  display: grid;
  align-items: center;
  margin: 4px 0 0 3px;
  background: linear-gradient(#605e5c, #605e5c) center / calc(100% - 12px) 2px no-repeat;
}

.range input {
  grid-area: 1 / 1;
  width: 100%;
  height: 18px;
  appearance: none;
  pointer-events: none;
}

.range input::-webkit-slider-thumb {
  appearance: none;
  pointer-events: auto;
  width: 17px;
  height: 17px;
  border: 1px solid #605e5c;
  border-radius: 50%;
  background: #fff;
}

/* Report rows */
.row-top {
  display: flex;
  align-items: flex-start;
  padding: 18px 17px 0 43px;
}

.pie {
  width: 220px;
  height: 110px;
  font-size: 8px;
  fill: #605e5c;
}

.lead {
  fill: none;
  stroke: #b3b0ad;
}

.legend {
  flex: 1;
  list-style: none;
  padding: 40px 0 0 29px;
  font-size: 9px;
  line-height: 16px;
  color: #605e5c;
  white-space: nowrap;
}

.legend li {
  display: flex;
  align-items: center;
  gap: 2px;
}

.dot {
  width: 7px;
  height: 7px;
  border-radius: 50%;
}

.dot.light { background: #118dff; }
.dot.dark { background: #12239e; }

.card {
  height: 77px;
  background: #b5cbcd;
  border: 1px solid #cfdfe0;
  text-align: center;
  color: #252423;
}

.card p {
  font-family: Inter, sans-serif;
  font-size: 15px;
  line-height: 18px;
}

.card strong {
  display: block;
  margin-top: 6px;
  font-family: Roboto, sans-serif;
  font-size: 27px;
  font-weight: 400;
  line-height: 34px;
}

.row-top .card {
  margin-top: 17px;
}

.w-conv { width: 143px; }
.w-seg { width: 159px; margin-left: 26px; }
.w-reg { width: 122px; }
.w-cvt { width: 144px; margin-left: 24px; }
.w-sin { width: 180px; margin-left: 21px; }
.w-reg p { padding: 0 12px; }

.row-bottom {
  display: flex;
  margin-top: 17px;
  padding: 0 12px 0 7px;
}

.visual-tools {
  margin: auto 0 3px auto;
  display: flex;
  gap: 10px;
  color: #8a8886;
}

.visual-tools svg {
  width: 13px;
  height: 13px;
}

/* Table visual */
.table-visual {
  position: relative;
  margin: 0 8px 0 10px;
  padding: 1px 3px 3px;
  display: grid;
  grid-template-columns: 1fr 7px;
  grid-template-rows: 136px 7px;
  border: 1px solid #d2d0ce;
}

.page::after {
  content: "";
  border-top: 1px dashed #605e5c;
}

.table-scroll {
  overflow: hidden;
}

table {
  width: 100%;
  table-layout: fixed;
  border-collapse: separate;
  border-spacing: 0;
  font-size: 9px;
  color: #252423;
}

.c1 { width: 14px; }
.c2 { width: 62px; }
.c3 { width: 64px; }
.c4 { width: 48px; }
.c5 { width: 113px; }
.c6 { width: 149px; }
.c7 { width: 145px; }
.c8 { width: 106px; }

th {
  position: sticky;
  top: 0;
  height: 22px;
  padding: 0 0 4px 4px;
  background: #b5cbcd;
  border-right: 1px solid #bfd2d4;
  border-bottom: 1px solid #6db1f2;
  color: #fff;
  font-weight: 400;
  text-align: left;
  white-space: nowrap;
  overflow: hidden;
}

td {
  height: 14px;
  padding: 0 0 0 4px;
  line-height: 14px;
  white-space: nowrap;
}

td:first-child {
  padding-left: 0;
}

td:nth-child(8) {
  text-align: right;
  padding-right: 4px;
}

td:last-child {
  text-align: right;
}

tbody tr:nth-child(even) {
  background: #ededed;
}

.vbar {
  display: flex;
  flex-direction: column;
  background: #f3f2f1;
}

.vbar svg,
.hbar svg {
  width: 6px;
  height: 6px;
}

.vbar svg:first-child {
  margin: 5px 0 10px;
  transform: rotate(180deg);
}

.vbar i {
  height: 7px;
  background: #cdcdcd;
}

.vbar svg:last-child {
  margin: auto 0 6px;
}

.hbar {
  display: grid;
  grid-template-columns: 226px 1fr 24px;
  background: #f3f2f1;
}

.hbar i {
  background: #cdcdcd;
}

.hbar svg:first-child {
  margin-left: 5px;
  transform: rotate(90deg);
}

.hbar svg:last-child {
  margin-left: 11px;
  transform: rotate(-90deg);
}

/* Selection handles lie over the frame of the visual */
.handle {
  position: absolute;
  width: 8px;
  height: 8px;
  border: 0 solid #8a8886;
}

.tl { left: -2px; top: -2px; border-width: 3px 0 0 3px; }
.tr { right: -2px; top: -2px; border-width: 3px 3px 0 0; }
.bl { left: -2px; bottom: -2px; border-width: 0 0 3px 3px; }
.br { right: -2px; bottom: -2px; border-width: 0 3px 3px 0; }
.tc { left: 50%; top: -2px; border-top-width: 3px; }
.bc { left: 50%; bottom: -2px; border-bottom-width: 3px; }
.ml { left: -2px; top: 48%; border-left-width: 3px; }
.mr { right: -2px; top: 48%; border-right-width: 3px; }

/* Collapsed filter pane */
.filters {
  flex: none;
  width: 26px;
  display: flex;
  flex-direction: column;
  align-items: center;
  padding-top: 9px;
}

.filters svg {
  width: 10px;
  height: 10px;
}

.filters button {
  margin-bottom: 14px;
}

.filters h3 {
  margin-top: 6px;
  writing-mode: vertical-rl;
  font-size: 12px;
  font-weight: 600;
}

/* Page tabs */
.tabs {
  flex: none;
  height: 28px;
  display: flex;
  border-bottom: 1px solid #e1dfdd;
  font-size: 9px;
}

.tabs button {
  flex: 1 1 auto;
  border-right: 1px solid #c8c6c4;
  white-space: nowrap;
}

.tabs .arrows {
  width: 33px;
  display: flex;
  border-right: 1px solid #c8c6c4;
}

.tabs .arrows button {
  border: none;
  font-size: 7px;
  color: #000;
}

.tabs .arrows button:disabled {
  color: #bdbbb9;
}

.tabs .t0 {
  flex: 0 0 33px;
  justify-content: flex-start;
  overflow: hidden;
}

.tabs .t0 span {
  margin-left: -5px;
}

.tabs .active {
  background: #fff;
  color: #252423;
  font-weight: 600;
  border-right: none;
  box-shadow: inset 0 -3px #117865;
}

.tabs .add {
  flex: 0 0 32px;
  background: #117865;
  color: #fff;
  font-size: 16px;
  font-weight: 800;
  border: none;
}

/* Visualizations pane */
.viz {
  flex: none;
  width: 146px;
  display: flex;
  flex-direction: column;
  border-left: 1px solid #e1dfdd;
  border-right: 1px solid #d2d0ce;
}

.pane-head {
  display: flex;
  align-items: center;
  justify-content: space-between;
  height: 31px;
  padding: 0 6px;
}

.pane-head h3 {
  font-size: 12px;
  font-weight: 600;
  color: #252423;
}

.pane-head svg {
  width: 10px;
  height: 10px;
}

.viz h4 {
  padding-left: 6px;
  font-size: 10px;
  font-weight: 600;
  line-height: 12px;
}

.modes {
  display: flex;
  justify-content: space-between;
  padding: 3px 6px 0;
}

.modes button {
  width: 26px;
  height: 26px;
}

.modes svg {
  width: 22px;
  height: 22px;
}

.modes .on {
  background: #d2d0ce;
}

.notch {
  width: 100%;
  height: 8px;
  margin-top: 3px;
}

.gallery {
  display: grid;
  grid-template-columns: repeat(6, 1fr);
  grid-auto-rows: 1fr;
  height: 158px;
  margin: 5px 4px 0;
}

.gallery svg {
  width: 16px;
  height: 16px;
  font-size: 7px;
  fill: #2a7fc4;
}

.gallery .big {
  font-size: 13px;
  font-weight: 700;
}

.gallery .on {
  outline: 2px solid #c8c6c4;
  outline-offset: -2px;
}

.wells {
  flex: 1;
  min-height: 0;
  display: flex;
  margin-top: 5px;
  border-top: 1px solid #e1dfdd;
}

.wells-main {
  flex: 1;
  min-width: 0;
  display: flex;
  flex-direction: column;
}

.viz h5 {
  padding-left: 9px;
  font-size: 10px;
  font-weight: 400;
  line-height: 26px;
}

.wells-bar {
  width: 4px;
  margin-top: 2px;
  border-radius: 2px 2px 0 0;
  background: #cfcdcb;
}

.well {
  flex: 1;
  min-height: 0;
  display: flex;
  flex-direction: column;
  gap: 1px;
  margin: 0 1px 0 4px;
  padding: 0 1px 7px;
  background: #fff;
  border: 1px dashed #c8c6c4;
  font-size: 9px;
}

.pill {
  flex: 1;
  min-height: 0;
  display: flex;
  align-items: center;
  gap: 4px;
  padding: 0 3px 0 2px;
  background: #edebe9;
  border: 1px solid #c8c6c4;
}

.pill span {
  flex: 1;
  white-space: nowrap;
}

.pill svg {
  width: 10px;
  height: 10px;
}

.pill .x {
  width: 8px;
  height: 8px;
}

.viz .drill {
  font-weight: 600;
  line-height: 28px;
}

.switch {
  display: flex;
  align-items: center;
  justify-content: space-between;
  padding: 0 4px 6px 9px;
  line-height: 14px;
}

.switch input {
  appearance: none;
  width: 26px;
  height: 13px;
  border: 1px solid #605e5c;
  border-radius: 7px;
  background: radial-gradient(circle at 7px 6px, #3b3a39 3px, #fff 4px);
}

/* Data pane */
.data {
  flex: none;
  width: 180px;
  display: flex;
  flex-direction: column;
}

.data .pane-head {
  padding: 0 4px 0 7px;
}

.search {
  display: flex;
  align-items: center;
  gap: 5px;
  height: 21px;
  margin: 5px 1px 6px 4px;
  padding: 0 5px;
  background: #fff;
  border: 1px solid #a19f9d;
}

.search svg {
  width: 12px;
  height: 12px;
}

.search input {
  flex: 1;
  min-width: 0;
  outline: none;
  font-size: 11px;
}

.search input::placeholder {
  color: #484644;
}

.tree-clip {
  flex: 1;
  min-height: 0;
  position: relative;
  display: flex;
  flex-direction: column;
  margin-bottom: 6px;
  overflow: hidden;
}

.tree {
  flex: 1;
  display: flex;
  flex-direction: column;
  margin: -13px 0 -12px;
  font-size: 9px;
}

.tree-bar {
  position: absolute;
  right: 1px;
  top: 5%;
  width: 5px;
  height: 32%;
  background: #c8c6c4;
}

.node {
  flex: 1 1 0;
  min-height: 0;
  display: flex;
  align-items: center;
  padding: 0 2px 0 5px;
}

.node .twist {
  flex: none;
  width: 10px;
  height: 10px;
  color: #605e5c;
}

.tbl {
  display: flex;
  width: 12px;
  margin: 0 4px 0 3px;
  position: relative;
}

.tbl svg {
  width: 12px;
  height: 12px;
}

.tbl .badge {
  position: absolute;
  left: 6px;
  top: 5px;
  width: 10px;
  height: 10px;
}

.field {
  padding-left: 17px;
}

.node input {
  appearance: none;
  flex: none;
  width: 10px;
  height: 10px;
  margin: 0 5px;
  border: 1px solid #8a8886;
  border-radius: 2px;
}

.node input:checked {
  border-color: #117865;
  background: #117865 url("data:image/svg+xml,%3Csvg xmlns='http://www.w3.org/2000/svg' viewBox='0 0 10 10'%3E%3Cpath d='M2 5l2 2 4-4' fill='none' stroke='%23fff' stroke-width='1.2'/%3E%3C/svg%3E") center / 9px;
}

.ico {
  flex: none;
  display: flex;
  width: 15px;
}

.ico svg {
  width: 13px;
  height: 13px;
}

.ico .sigma {
  width: 11px;
  height: 12px;
}

.node .name {
  flex: 1;
  white-space: nowrap;
}

.marked {
  flex: 2 1 0;
  min-height: 0;
  display: flex;
  flex-direction: column;
  position: relative;
}

.marked::after {
  content: "";
  position: absolute;
  inset: -1px 0 -2px 28px;
  border: 2px solid #f50f0f;
  border-radius: 6px;
  pointer-events: none;
}

/* Status bar */
.status {
  flex: none;
  height: 20px;
  display: flex;
  align-items: center;
  gap: 4px;
  padding-right: 17px;
  border-top: 1px solid #e1dfdd;
}

.page-no {
  flex: 1;
  margin-left: -3px;
}

.status input {
  appearance: none;
  width: 80px;
  height: 10px;
  background: linear-gradient(#605e5c, #605e5c) center / 100% 1px no-repeat;
}

.status input::-webkit-slider-thumb {
  appearance: none;
  width: 3px;
  height: 9px;
  background: #484644;
}

.status .pct {
  margin: 0 8px 0 8px;
  color: #605e5c;
}

.status svg {
  width: 14px;
  height: 12px;
}
```
